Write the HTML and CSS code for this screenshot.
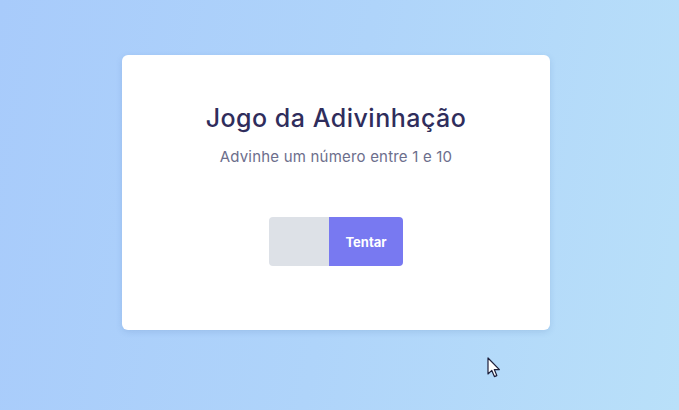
FILE: index.html
```html
<!DOCTYPE html>
<html lang="pt">
<head>
<meta charset="utf-8">
<title>Jogo da Adivinhação</title>
<link rel="stylesheet" href="styles.css">
</head>
<body>
<main class="page">
  <section class="card">
    <h1 class="title">Jogo da Adivinhação</h1>
    <p class="subtitle">Advinhe um número entre 1 e 10</p>
    <form class="guess" onsubmit="return false">
      <input class="guess-input" type="text" aria-label="Número">
      <button class="guess-btn" type="submit">Tentar</button>
    </form>
  </section>
</main>
<svg class="cursor" width="14" height="22" viewBox="0 0 14 22" aria-hidden="true">
  <path d="M1 1 L1 17 L4.8 13.4 L7.4 19.6 L9.8 18.6 L7.3 12.6 L12.4 12.6 Z" fill="#fff" stroke="#1d1f3a" stroke-width="1.2" stroke-linejoin="round"/>
</svg>
</body>
</html>
```
FILE: styles.css
```css
html, body {
  margin: 0;
  padding: 0;
}
body {
  width: 679px;
  height: 410px;
  overflow: hidden;
  background: linear-gradient(100deg, #a8cbfb 0%, #afd4fa 50%, #b9e0f9 100%);
  font-family: Inter, "Noto Sans", sans-serif;
  position: relative;
}
.page {
  padding: 55px 0 0 122px;
}
.card {
  width: 428px;
  height: 275px;
  box-sizing: border-box;
  background: #fff;
  border-radius: 6px;
  box-shadow: 0 2px 6px rgba(70, 110, 170, 0.18);
  display: flex;
  flex-direction: column;
  align-items: center;
  padding-top: 45px;
}
.title {
  margin: 0;
  font-size: 25px;
  font-weight: 500;
  color: #2f2d5c;
  letter-spacing: 0.5px;
  line-height: 36px;
}
.subtitle {
  margin: 11px 0 0;
  font-size: 15px;
  font-weight: 400;
  color: #6c6e8c;
  letter-spacing: 0.2px;
  line-height: 20px;
}
.guess {
  display: flex;
  margin-top: 50px;
}
.guess-input {
  width: 60px;
  height: 49px;
  box-sizing: border-box;
  border: none;
  background: #dde1e7;
  border-radius: 4px 0 0 4px;
  padding: 0 8px;
  outline: none;
}
.guess-btn {
  width: 74px;
  height: 49px;
  border: none;
  background: #7879f1;
  color: #fff;
  font-family: Inter, "Noto Sans", sans-serif;
  font-weight: 700;
  font-size: 13px;
  border-radius: 0 4px 4px 0;
  padding: 0;
  cursor: pointer;
}
.cursor {
  position: absolute;
  left: 487px;
  top: 357px;
}
```
